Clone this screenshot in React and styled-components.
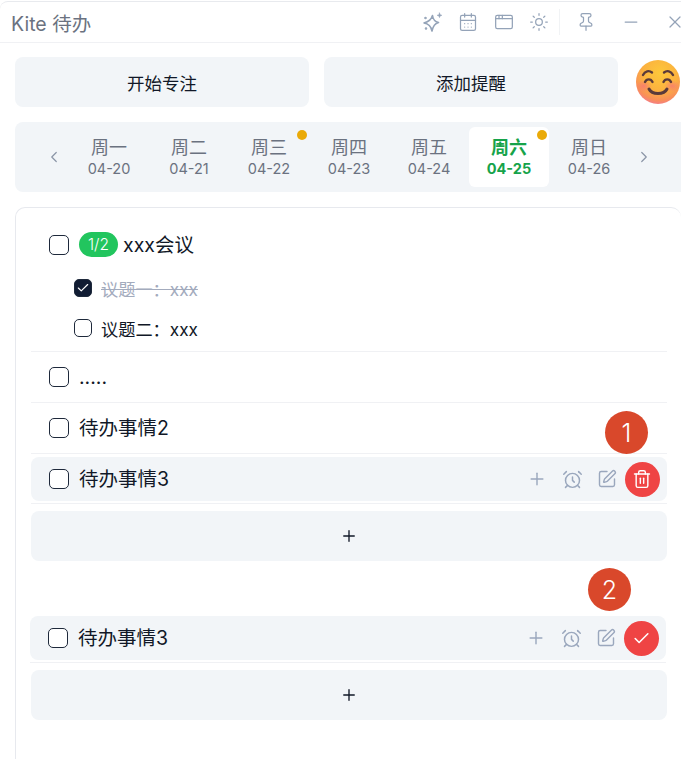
import styled, { createGlobalStyle } from 'styled-components';
import {
  AlarmClock, AppWindow, CalendarDays, Check, ChevronLeft, ChevronRight, Minus, Pin, Plus,
  SquarePen, Sun, Trash2, X,
} from 'lucide-react';

const FONT = 'Inter, "Noto Sans CJK SC", sans-serif';

const GlobalStyle = createGlobalStyle`
  html, body {
    margin: 0;
    height: 759px;
    overflow: hidden;
    background: #fff;
  }
  body {
    font-family: ${FONT};
    color: #111827;
  }
`;

const Page = styled.div`
  width: 681px;
  height: 759px;
  padding-top: 1px;
  box-sizing: border-box;
  overflow: hidden;
`;

const TitleBar = styled.header`
  height: 42px;
  box-sizing: border-box;
  display: flex;
  align-items: center;
  border-top: 1px solid #e8eaee;
  border-bottom: 1px solid #f0f1f4;
  border-top-left-radius: 8px;
  padding-left: 11px;
  overflow: hidden;
`;

const Title = styled.div`
  font-size: 19.5px;
  color: #6b7280;
  width: 81px;
  overflow: hidden;
  white-space: nowrap;
`;

const TitleTools = styled.div`
  margin-left: auto;
  margin-right: -16px;
  display: flex;
  align-items: center;
  color: #94a3b8;
`;

const ToolButton = styled.span`
  width: 35.3px;
  height: 24px;
  display: flex;
  align-items: center;
  justify-content: center;
  flex: none;
`;

const ToolDivider = styled.span`
  width: 1px;
  height: 26px;
  background: #f1f3f5;
  margin: 0 9px 0 2px;
`;

const WindowButton = styled.span`
  width: 44px;
  height: 24px;
  display: flex;
  align-items: center;
  justify-content: center;
  flex: none;
  margin-left: ${(p) => p.$gap || 0}px;
`;

const Content = styled.main`
  padding: 14px 0 0 15px;
`;

const ActionRow = styled.div`
  display: flex;
  align-items: center;
  gap: 15px;
`;

const ActionButton = styled.button`
  width: 294px;
  height: 50px;
  border: none;
  border-radius: 8px;
  background: #f2f5f8;
  color: #111827;
  font-family: ${FONT};
  font-size: 17.5px;
  padding: 0;
`;

const Avatar = styled.svg`
  width: 46px;
  height: 46px;
  margin-left: 2px;
  flex: none;
`;

const WeekStrip = styled.nav`
  margin-top: 15px;
  height: 70px;
  box-sizing: border-box;
  padding: 5px 0 5px 30px;
  display: flex;
  align-items: center;
  gap: 6px;
  background: #f2f5f8;
  border-radius: 8px 0 0 8px;
`;

const ArrowButton = styled.span`
  width: 18px;
  display: flex;
  justify-content: center;
  color: #8a94a6;
  flex: none;
`;

const Days = styled.div`
  display: flex;
`;

const Day = styled.div`
  position: relative;
  width: 80px;
  height: 60px;
  box-sizing: border-box;
  padding-top: 9px;
  border-radius: 6px;
  text-align: center;
  background: ${(p) => (p.$active ? '#fff' : 'transparent')};
  color: ${(p) => (p.$active ? '#16a34a' : '#6b7280')};
  font-weight: ${(p) => (p.$active ? 700 : 400)};
`;

const DayName = styled.div`
  font-size: 18px;
  line-height: 24px;
`;

const DayDate = styled.div`
  font-size: 14.5px;
  line-height: 18px;
`;

const Dot = styled.span`
  position: absolute;
  top: 3px;
  right: 2px;
  width: 10px;
  height: 10px;
  border-radius: 50%;
  background: #eaaa08;
`;

const Card = styled.section`
  margin-top: 15px;
  height: 620px;
  box-sizing: border-box;
  padding: 13px 14px 0 15px;
  border: 1px solid #e7e9ee;
  border-right: none;
  border-radius: 10px 10px 0 0;
`;

const Item = styled.div`
  border-bottom: 1px solid #f0f1f4;
  padding-bottom: ${(p) => (p.$sub ? '3px' : '0')};
`;

const Row = styled.div`
  position: relative;
  display: flex;
  align-items: center;
  gap: 10px;
  height: ${(p) => p.$h || 50}px;
  padding-left: 18px;
  font-size: 19.5px;
  line-height: 24px;
`;

const SubRow = styled.div`
  display: flex;
  align-items: center;
  gap: 9px;
  height: 40px;
  padding-left: 43px;
  font-size: 17.2px;
  color: ${(p) => (p.$done ? '#a3abbd' : '#111827')};
  text-decoration: ${(p) => (p.$done ? 'line-through' : 'none')};
`;

const Box = styled.span`
  width: ${(p) => (p.$small ? 18 : 20)}px;
  height: ${(p) => (p.$small ? 18 : 20)}px;
  box-sizing: border-box;
  flex: none;
  display: flex;
  align-items: center;
  justify-content: center;
  border: 1.3px solid #1e293b;
  border-radius: 5px;
  background: ${(p) => (p.$checked ? '#111c33' : '#fff')};
  color: #fff;
`;

const Badge = styled.span`
  display: inline-flex;
  align-items: center;
  justify-content: center;
  width: 39px;
  height: 25px;
  border-radius: 13px;
  background: #22c55e;
  color: #fff;
  font-size: 15.5px;
  font-weight: 300;
  margin-right: -5px;
`;

const HoverItem = styled.div`
  margin-top: ${(p) => p.$top}px;
  margin-left: ${(p) => p.$shift || 0}px;
  margin-right: ${(p) => -(p.$shift || 0)}px;
`;

const HoverRow = styled(Row)`
  background: #f2f5f8;
  border-radius: 8px;
`;

const RowRule = styled.div`
  height: 1px;
  margin-top: 2px;
  background: #f0f1f4;
`;

const RowActions = styled.div`
  margin-left: auto;
  padding-right: 7.5px;
  display: flex;
  align-items: center;
  color: #9aa7bd;
`;

const IconButton = styled.span`
  width: 35px;
  height: 35px;
  display: flex;
  align-items: center;
  justify-content: center;
  border-radius: 50%;
  background: ${(p) => (p.$danger ? '#ef4444' : 'transparent')};
  color: ${(p) => (p.$danger ? '#fff' : 'inherit')};
`;

const AddButton = styled.button`
  display: flex;
  align-items: center;
  justify-content: center;
  width: 100%;
  height: 50px;
  margin-top: ${(p) => p.$top}px;
  padding: 0;
  border: none;
  border-radius: 8px;
  background: #f2f5f8;
  color: #111827;
`;

const Callout = styled.span`
  position: absolute;
  top: ${(p) => p.$top}px;
  right: ${(p) => p.$right}px;
  width: 43px;
  height: 43px;
  display: flex;
  align-items: center;
  justify-content: center;
  border-radius: 50%;
  background: #d9482b;
  color: #fff;
  font-size: 25px;
  font-weight: 300;
`;

const days = [
  ['周一', '04-20'],
  ['周二', '04-21'],
  ['周三', '04-22', true],
  ['周四', '04-23'],
  ['周五', '04-24'],
  ['周六', '04-25', true, true],
  ['周日', '04-26'],
];

const SparkIcon = () => (
  <svg width="22" height="22" viewBox="0 0 22 22" fill="none" stroke="currentColor" strokeWidth="1.6" strokeLinejoin="round" strokeLinecap="round">
    <path d="M10.500 4.500C11 8.500 12.500 10.500 16.500 11.500 12.500 12.500 11 15 10 20 9 15 7 12.800 2 12 7 10.500 9.500 8.500 10.500 4.500Z" />
    <path d="M17.500 2l.6 1.700 1.700.6-1.700.6-.6 1.700-.6-1.700-1.700-.6 1.700-.6Z" fill="currentColor" strokeWidth="0.6" />
    <circle cx="3.500" cy="7" r="0.500" fill="currentColor" />
    <circle cx="4" cy="17.500" r="0.500" fill="currentColor" />
  </svg>
);

const Smile = () => (
  <Avatar viewBox="0 0 46 46">
    <defs>
      <radialGradient id="face" cx="55%" cy="30%" r="72%">
        <stop offset="0%" stopColor="#fdc83a" />
        <stop offset="55%" stopColor="#fbb23f" />
        <stop offset="85%" stopColor="#f98f58" />
        <stop offset="100%" stopColor="#f47d8a" />
      </radialGradient>
      <radialGradient id="blush">
        <stop offset="0%" stopColor="#f76f7c" stopOpacity="0.7" />
        <stop offset="100%" stopColor="#f76f7c" stopOpacity="0" />
      </radialGradient>
    </defs>
    <circle cx="23" cy="23" r="22" fill="url(#face)" />
    <ellipse cx="9" cy="27" rx="8" ry="6" fill="url(#blush)" />
    <ellipse cx="37" cy="27" rx="8" ry="6" fill="url(#blush)" />
    <g fill="none" stroke="#5a3a3a" strokeWidth="2.400" strokeLinecap="round">
      <path d="M8 16c2-4 6-5 9-2.500" />
      <path d="M10 23c1.500-3.500 6-3.500 7.500 0" />
      <path d="M29 13.500c3-2.500 7-1.500 9 2.500" />
      <path d="M28.500 23c1.500-3.500 6-3.500 7.500 0" />
      <path d="M14 30c3 6 15 6 18 0" strokeWidth="3" />
    </g>
  </Avatar>
);

const HoverTodo = ({ top, shift, number, calloutTop, calloutRight, confirm }) => (
  <HoverItem $top={top} $shift={shift}>
    <HoverRow $h={44}>
      <Box />
      <span>待办事情3</span>
      <RowActions>
        <IconButton><Plus size={20} strokeWidth={1.7} /></IconButton>
        <IconButton><AlarmClock size={21} strokeWidth={1.7} /></IconButton>
        <IconButton><SquarePen size={20} strokeWidth={1.7} /></IconButton>
        <IconButton $danger>{confirm ? <Check size={19} strokeWidth={2} /> : <Trash2 size={20} strokeWidth={1.7} />}</IconButton>
      </RowActions>
      <Callout $top={calloutTop} $right={calloutRight}>{number}</Callout>
    </HoverRow>
    <RowRule />
  </HoverItem>
);

export default function App() {
  return (
    <Page>
      <GlobalStyle />
      <TitleBar>
        <Title>Kite 待办</Title>
        <TitleTools>
          <ToolButton><SparkIcon /></ToolButton>
          <ToolButton><CalendarDays size={20} strokeWidth={1.5} /></ToolButton>
          <ToolButton><AppWindow size={20} strokeWidth={1.5} /></ToolButton>
          <ToolButton><Sun size={20} strokeWidth={1.5} /></ToolButton>
          <ToolDivider />
          <ToolButton><Pin size={20} strokeWidth={1.5} /></ToolButton>
          <WindowButton $gap={5}><Minus size={20} strokeWidth={1.5} /></WindowButton>
          <WindowButton><X size={20} strokeWidth={1.5} /></WindowButton>
        </TitleTools>
      </TitleBar>
      <Content>
        <ActionRow>
          <ActionButton>开始专注</ActionButton>
          <ActionButton>添加提醒</ActionButton>
          <Smile />
        </ActionRow>
        <WeekStrip>
          <ArrowButton><ChevronLeft size={18} strokeWidth={1.6} /></ArrowButton>
          <Days>
            {days.map(([name, date, dot, active]) => (
              <Day key={date} $active={active}>
                <DayName>{name}</DayName>
                <DayDate>{date}</DayDate>
                {dot && <Dot />}
              </Day>
            ))}
          </Days>
          <ArrowButton><ChevronRight size={18} strokeWidth={1.6} /></ArrowButton>
        </WeekStrip>
        <Card>
          <Item $sub>
            <Row $h={47}>
              <Box />
              <Badge>1/2</Badge>
              <span>xxx会议</span>
            </Row>
            <SubRow $done>
              <Box $small $checked><Check size={14} strokeWidth={2} /></Box>
              <span>议题一：xxx</span>
            </SubRow>
            <SubRow>
              <Box $small />
              <span>议题二：xxx</span>
            </SubRow>
          </Item>
          <Item>
            <Row><Box /><span>.....</span></Row>
          </Item>
          <Item>
            <Row><Box /><span>待办事情2</span></Row>
          </Item>
          <HoverTodo top={3} number="1" calloutTop={-46} calloutRight={19} />
          <AddButton $top={7}><Plus size={18} strokeWidth={1.8} /></AddButton>
          <HoverTodo top={55} shift={-1} number="2" calloutTop={-48} calloutRight={35} confirm />
          <AddButton $top={7}><Plus size={18} strokeWidth={1.8} /></AddButton>
        </Card>
      </Content>
    </Page>
  );
}
